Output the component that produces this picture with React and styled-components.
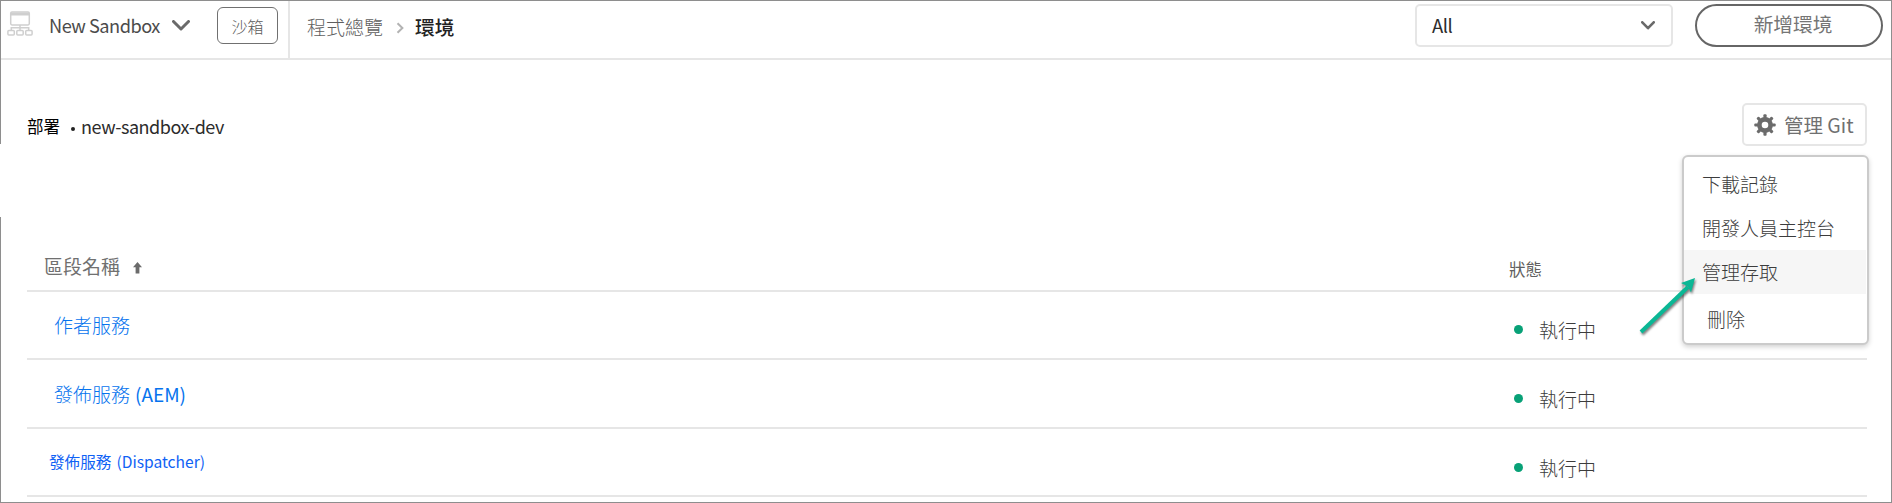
import React from "react";
import styled, { createGlobalStyle } from "styled-components";

const GlobalStyle = createGlobalStyle`
  * { box-sizing: border-box; }
  body {
    margin: 0;
    background: #fff;
    font-family: "Noto Sans CJK TC", "Noto Sans", sans-serif;
  }
`;

const Frame = styled.div`
  position: relative;
  width: 1892px;
  height: 503px;
  overflow: hidden;
  border: 1px solid #8e8e8e;
  border-left-width: 0;
  padding-left: 1px;
  background: linear-gradient(#8e8e8e 0 143px, #fff 143px 216px, #8e8e8e 216px) left / 1px 100% no-repeat #fff;
`;

const Text = styled.span`
  display: block;
  flex: none;
  white-space: nowrap;
  font-size: ${(p) => p.$size || 19}px;
  line-height: 28px;
  font-weight: ${(p) => p.$weight || 300};
  color: ${(p) => p.$color || "#3c3c3c"};
  letter-spacing: ${(p) => p.$track || 0}px;
`;

const Header = styled.header`
  display: flex;
  height: 59px;
  border-bottom: 2px solid #e6e6e6;
`;

const Program = styled.div`
  display: flex;
  align-items: flex-start;
  width: 289px;
  padding: 6px 0 0 6px;
  border-right: 2px solid #e6e6e6;
`;

const ProgramIcon = styled.svg`
  margin: 4px 16px 0 0;
  flex: none;
`;

const ProgramName = styled.div`
  display: flex;
  align-items: center;
  width: 168px;
  gap: 12px;
  padding-top: 4px;
`;

const Tag = styled.div`
  display: flex;
  justify-content: center;
  align-items: center;
  width: 61px;
  height: 37px;
  border: 1px solid #707070;
  border-radius: 6px;
`;

const Breadcrumb = styled.nav`
  display: flex;
  align-items: flex-start;
  flex: 1;
  padding: 12px 0 0 17px;
`;

const Separator = styled.svg`
  margin: 9px 11px 0 13px;
`;

const Actions = styled.div`
  display: flex;
  gap: 22px;
  padding: 3px 8px 0 0;
`;

const Select = styled.div`
  display: flex;
  align-items: center;
  justify-content: space-between;
  width: 258px;
  height: 43px;
  padding: 0 16px 1px 15px;
  border: 2px solid #e6e6e6;
  border-radius: 5px;
`;

const AddButton = styled.button`
  display: flex;
  align-items: center;
  justify-content: center;
  width: 188px;
  height: 43px;
  padding: 0 0 3px 8px;
  border: 2px solid #666;
  border-radius: 22px;
  background: #fff;
  font-family: inherit;
`;

const Deployment = styled.section`
  display: flex;
  justify-content: space-between;
  height: 140px;
  padding: 43px 24px 0 26px;
`;

const DeploymentName = styled.div`
  display: flex;
  padding-top: 9px;
`;

const Bullet = styled.i`
  width: 4px;
  height: 4px;
  margin: 15px 6px 0 11px;
  border-radius: 50%;
  background: #222;
`;

const GitButton = styled.button`
  display: flex;
  align-items: center;
  gap: 8px;
  width: 125px;
  height: 43px;
  padding: 0 0 0 10px;
  border: 2px solid #e6e6e6;
  border-radius: 5px;
  background: #fff;
  font-family: inherit;
`;

const Table = styled.section`
  margin: 0 24px 0 26px;
`;

const Row = styled.div`
  display: grid;
  grid-template-columns: 1482px 1fr;
  height: ${(p) => p.$height}px;
  border-bottom: 2px solid #e6e6e6;
`;

const NameCell = styled.div`
  display: flex;
  gap: 5px;
  padding: ${(p) => p.$top}px 0 0 ${(p) => p.$left}px;
`;

const StatusCell = styled.div`
  display: flex;
  gap: 16px;
  padding: ${(p) => p.$top}px 0 0 ${(p) => p.$left ?? 5}px;
`;

const Dot = styled.i`
  width: 9px;
  height: 9px;
  margin-top: 9px;
  border-radius: 50%;
  background: #08a177;
`;

const SortArrow = styled.svg`
  margin: 10px 0 0 8px;
`;

const Menu = styled.div`
  position: absolute;
  top: 154px;
  left: 1682px;
  width: 187px;
  height: 190px;
  padding-top: 5px;
  border: 2px solid #cbcbcb;
  border-radius: 6px;
  background: #fff;
  box-shadow: 0 2px 5px rgba(0, 0, 0, 0.18);
`;

const MenuItem = styled.div`
  display: flex;
  align-items: center;
  height: ${(p) => p.$height || 44}px;
  margin-right: 1px;
  padding-left: ${(p) => p.$indent || 18}px;
  background: ${(p) => (p.$active ? "#f6f6f6" : "transparent")};
`;

const Pointer = styled.svg`
  position: absolute;
  left: 1632px;
  top: 269px;
  filter: drop-shadow(1px 2px 1px rgba(0, 0, 0, 0.5));
`;

const Chevron = ({ w, h, stroke = 2.6, color = "#6a6a6a" }) => (
  <svg width={w} height={h} viewBox={`0 0 ${w} ${h}`} fill="none" stroke={color} strokeWidth={stroke} strokeLinecap="round" strokeLinejoin="round">
    <path d={`M${stroke / 2} ${stroke / 2} L${w / 2} ${h - stroke / 2 - 0.5} L${w - stroke / 2} ${stroke / 2}`} />
  </svg>
);

const Gear = () => (
  <svg width="22" height="22" viewBox="-11 -11 22 22" fill="#6b6b6b">
    {[0, 45, 90, 135, 180, 225, 270, 315].map((a) => (
      <rect key={a} x="-1.6" y="-10.7" width="3.2" height="5" rx="1" transform={`rotate(${a})`} />
    ))}
    <circle r="5.6" fill="none" stroke="#6b6b6b" strokeWidth="4.6" />
  </svg>
);

const rows = [
  { cjk: "作者服務", size: 19, color: "#0673ee", top: 19, left: 27, height: 68, statusTop: 24 },
  { cjk: "發佈服務", latin: "(AEM)", size: 19, latinWeight: 400, color: "#0673ee", top: 20, left: 27, height: 69, statusTop: 25 },
  { cjk: "發佈服務", latin: "(Dispatcher)", size: 15.6, weight: 400, color: "#0f62f5", top: 18, left: 22, height: 68, statusTop: 25 },
];

export default function App() {
  return (
    <>
      <GlobalStyle />
      <Frame>
        <Header>
          <Program>
            <ProgramIcon width="26" height="25" viewBox="0 0 26 25" fill="none" stroke="#cfcfcf" strokeWidth="1.5">
              <rect x="3.7" y="0.9" width="18.6" height="13" rx="1.3" />
              <path d="M4 3H22" strokeWidth="3" />
              <path d="M13 14v6M4.3 20v-3.2h17.4V20" />
              <rect x="0.9" y="19.4" width="6.4" height="4.6" rx="1" />
              <rect x="9.8" y="19.4" width="6.4" height="4.6" rx="1" />
              <rect x="18.7" y="19.4" width="6.4" height="4.6" rx="1" />
            </ProgramIcon>
            <ProgramName>
              <Text $size={18.2} $weight={400} $track={-0.5} $color="#4b4b4b">New Sandbox</Text>
              <Chevron w={18} h={11} stroke={3} />
            </ProgramName>
            <Tag><Text $size={16} $color="#5c5c5c">沙箱</Text></Tag>
          </Program>
          <Breadcrumb>
            <Text $color="#5f5f5f">程式總覽</Text>
            <Separator width="8" height="12" viewBox="0 0 8 12" fill="none" stroke="#b3b3b3" strokeWidth="2">
              <path d="M1.5 1.2 L6.4 6 L1.5 10.8" />
            </Separator>
            <Text $size={19.7} $weight={500} $color="#222">環境</Text>
          </Breadcrumb>
          <Actions>
            <Select>
              <Text $size={18.5} $weight={400} $track={-0.5} $color="#2c2c2c">All</Text>
              <Chevron w={14} h={9} />
            </Select>
            <AddButton><Text $size={19.7} $weight={400} $color="#757575">新增環境</Text></AddButton>
          </Actions>
        </Header>

        <Deployment>
          <DeploymentName>
            <Text $size={16.5} $weight={400} $color="#000">部署</Text>
            <Bullet />
            <Text $size={18} $weight={400} $track={-0.45} $color="#2c2c2c">new-sandbox-dev</Text>
          </DeploymentName>
          <GitButton>
            <Gear />
            <Text $size={19.5} $weight={400} $color="#707070">管理 Git</Text>
          </GitButton>
        </Deployment>

        <Table>
          <Row $height={92}>
            <NameCell $top={52} $left={17}>
              <Text $weight={400} $color="#707070">區段名稱</Text>
              <SortArrow width="9" height="12" viewBox="0 0 9 12" fill="#6b6b6b">
                <path d="M4.5 0 L9 5.2 H6.4 V11.5 H2.6 V5.2 H0 Z" />
              </SortArrow>
            </NameCell>
            <StatusCell $top={55} $left={0}>
              <Text $size={16.5} $weight={400} $color="#606060">狀態</Text>
            </StatusCell>
          </Row>
          {rows.map((r, i) => (
            <Row key={i} $height={r.height}>
              <NameCell $top={r.top} $left={r.left}>
                <Text $size={r.size} $weight={r.weight} $color={r.color}>{r.cjk}</Text>
                {r.latin && <Text $size={r.size} $weight={r.weight || r.latinWeight} $color={r.color}>{r.latin}</Text>}
              </NameCell>
              <StatusCell $top={r.statusTop}>
                <Dot />
                <Text>執行中</Text>
              </StatusCell>
            </Row>
          ))}
        </Table>

        <Menu>
          <MenuItem>
            <Text>下載記錄</Text>
          </MenuItem>
          <MenuItem>
            <Text>開發人員主控台</Text>
          </MenuItem>
          <MenuItem $active>
            <Text>管理存取</Text>
          </MenuItem>
          <MenuItem $indent={23} $height={50}>
            <Text>刪除</Text>
          </MenuItem>
        </Menu>
        <Pointer width="72" height="72" viewBox="0 0 72 72">
          <path d="M9 62 L56 17" stroke="#0bb795" strokeWidth="4" />
          <path d="M63 8 L59 22.500 L56 16.5 L49 13 Z" fill="#0bb795" />
        </Pointer>
      </Frame>
    </>
  );
}
